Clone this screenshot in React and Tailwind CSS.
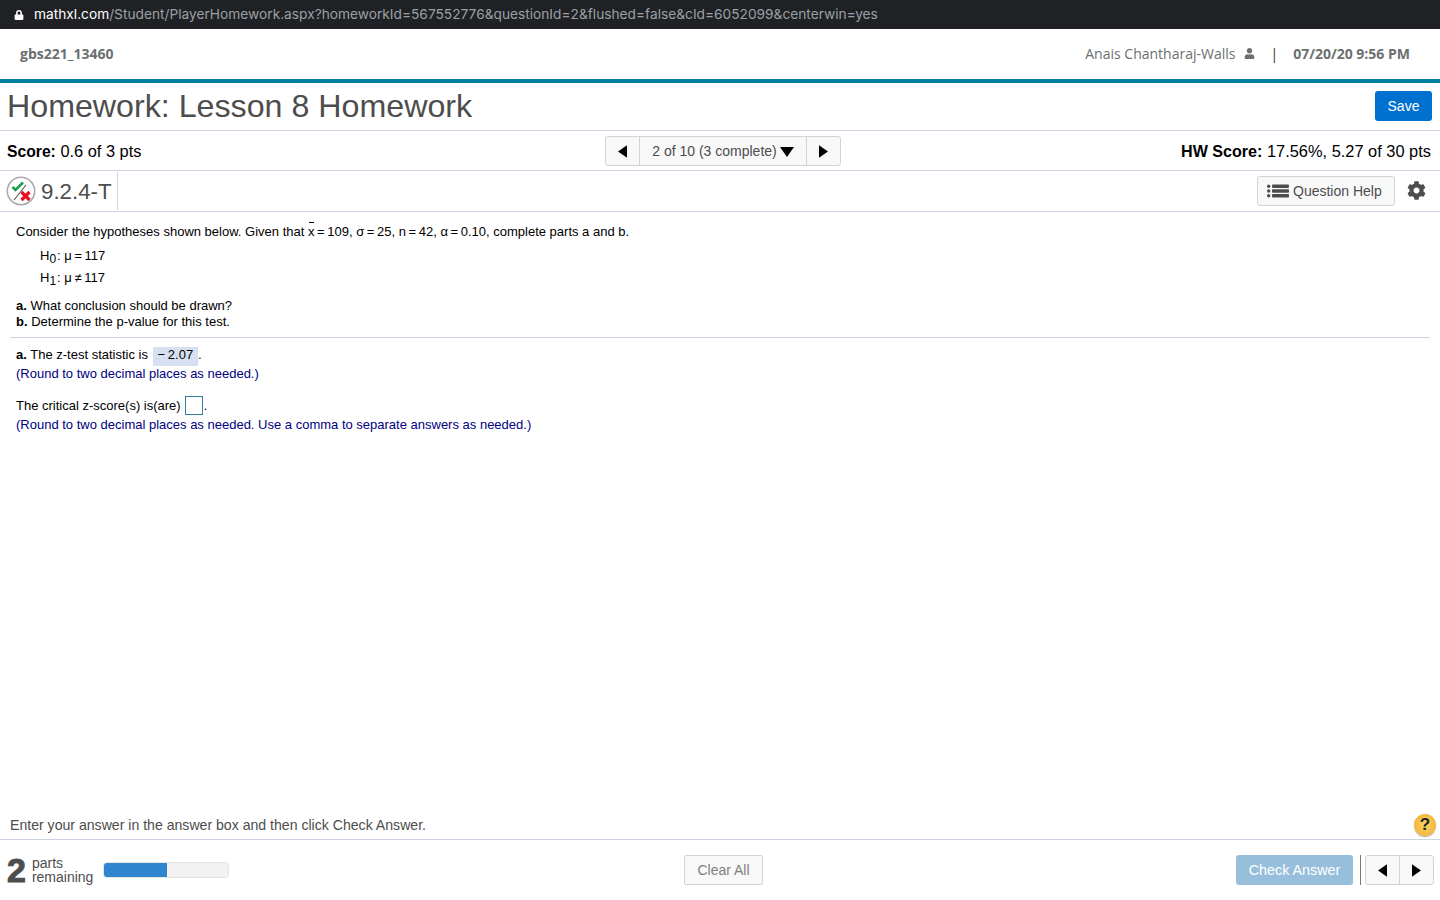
import { FaLock, FaUser, FaCog } from 'react-icons/fa'

const arial = "font-['Liberation_Sans',Arial,sans-serif]"

function Caret({ dir = 'left', className = '' }) {
  const pts = dir === 'left' ? '10,0 10,14 0,7' : dir === 'right' ? '0,0 0,14 10,7' : '0,0 14,0 7,10'
  const box = dir === 'down' ? '0 0 14 10' : '0 0 10 14'
  return (
    <svg viewBox={box} className={className} fill="#000">
      <polygon points={pts} />
    </svg>
  )
}

function StatusIcon() {
  return (
    <svg viewBox="0 0 30 30" className="w-[30px] h-[30px] shrink-0">
      <circle cx="15" cy="15" r="13.7" fill="#fff" stroke="#aaa" strokeWidth="1.6" />
      <line x1="8" y1="24" x2="20" y2="9" stroke="#555" strokeWidth="1.2" />
      <path d="M6.5 11 L9.5 14 L17 6.5" fill="none" stroke="#1f9e4a" strokeWidth="2.6" />
      <path d="M15.5 16 L23.5 24 M23.5 16 L15.5 24" fill="none" stroke="#e8101c" strokeWidth="3.2" />
    </svg>
  )
}

function ListIcon() {
  return (
    <svg viewBox="0 0 22 14" className="w-[22px] h-[14px]" fill="#4d4d4d">
      <rect x="0" y="0.5" width="3.4" height="3.4" rx="1.7" />
      <rect x="0" y="5.3" width="3.4" height="3.4" rx="1.7" />
      <rect x="0" y="10.1" width="3.4" height="3.4" rx="1.7" />
      <rect x="5" y="0.5" width="17" height="3.4" rx="0.8" />
      <rect x="5" y="5.3" width="17" height="3.4" rx="0.8" />
      <rect x="5" y="10.1" width="17" height="3.4" rx="0.8" />
    </svg>
  )
}

export default function App() {
  return (
    <div className={`h-screen flex flex-col bg-white overflow-hidden ${arial}`}>
      {/* browser address bar */}
      <div className="h-[29px] bg-[#202124] flex items-center pl-[14px] shrink-0">
        <FaLock size={10} className="text-white mr-[10px]" />
        <span className="text-[13.72px] font-['Inter',sans-serif] text-[#9aa0a6] whitespace-nowrap">
          <span className="text-white">mathxl.com</span>
          /Student/PlayerHomework.aspx?homeworkId=567552776&questionId=2&flushed=false&cId=6052099&centerwin=yes
        </span>
      </div>

      {/* site header */}
      <div className="h-[50px] flex items-center justify-between pl-[20px] pr-[30px] pb-[2px] font-['Open_Sans',sans-serif] text-[#6a7070] shrink-0">
        <span className="text-[14px] font-bold">gbs221_13460</span>
        <div className="flex items-center text-[14px]">
          <span>Anais Chantharaj-Walls</span>
          <FaUser size={11} className="ml-[9px] text-[#6a7070]" />
          <span className="ml-[15px] text-[#333]">|</span>
          <span className="ml-[15px] font-bold">07/20/20 9:56 PM</span>
        </div>
      </div>
      <div className="h-[4px] bg-[#007fa3] shrink-0" />

      {/* title */}
      <div className="h-[48px] flex items-center justify-between pl-[7px] pr-[8px] pb-[2px] border-b border-[#ccd3e2] shrink-0">
        <h1 className="text-[32.2px] text-[#4d4d4d] pt-[2px]">Homework: Lesson 8 Homework</h1>
        <button className="w-[57px] h-[30px] pt-[2px] bg-[#0071ce] rounded-[3px] text-white text-[14px]">Save</button>
      </div>

      {/* score row */}
      <div className="h-[40px] grid grid-cols-[598px_auto_1fr] items-center pl-[7px] pr-[9px] border-b border-[#ccd3e2] shrink-0 text-[16.4px] text-black">
        <div className="pt-[2px]"><b className="text-[15.7px]">Score:</b> 0.6 of 3 pts</div>
        <div className="flex h-[30px] border border-[#d4d4d4] rounded-[3px] bg-[#f8f8f8] text-[14px] text-[#4d4d4d]">
          <div className="w-[34px] pt-[2px] flex items-center justify-center border-r border-[#d4d4d4]">
            <Caret dir="left" className="w-[9px] h-[13px]" />
          </div>
          <div className="w-[167px] pt-[2px] flex items-center justify-center gap-[3px] border-r border-[#d4d4d4]">
            2 of 10 (3 complete)
            <Caret dir="down" className="w-[14px] h-[10px]" />
          </div>
          <div className="w-[33px] pt-[2px] flex items-center justify-center">
            <Caret dir="right" className="w-[9px] h-[13px]" />
          </div>
        </div>
        <div className="text-right pt-[2px]"><b className="text-[16.1px]">HW Score:</b> 17.56%, 5.27 of 30 pts</div>
      </div>

      {/* question id row */}
      <div className="h-[41px] flex items-center border-b border-[#ccd3e2] shrink-0">
        <div className="h-[38px] w-[118px] flex items-center pl-[6px] gap-[5px] border-r border-[#ccd3e2] self-start mt-[1px]">
          <StatusIcon />
          <span className="text-[22.3px] text-[#4d4d4d] pt-[2px]">9.2.4-T</span>
        </div>
        <div className="ml-auto flex items-center pr-[14px]">
          <button className="w-[138px] h-[30px] border border-[#d4d4d4] rounded-[3px] bg-[#f8f8f8] flex items-center pl-[9px] gap-[4px] text-[14px] text-[#4d4d4d]">
            <ListIcon />
            Question Help
          </button>
          <FaCog size={19} className="ml-[12px] mb-[2px] text-[#4d4d4d]" />
        </div>
      </div>

      {/* question */}
      <div className="flex-1 pl-[16px] pr-[10px] pt-[12px] text-[13px] text-black leading-[16px]">
        <p>
          Consider the hypotheses shown below. Given that{' '}
          <span className="relative inline-block">
            x
            <span className="absolute left-[1px] top-[-2px] w-[5px] h-[1px] bg-black" />
          </span>
          {'\u2009=\u2009109, σ\u2009=\u200925, n\u2009=\u200942, α\u2009=\u20090.10, complete parts a and b.'}
        </p>
        <div className="ml-[24px] mt-[8px]">
          <p className="h-[22px]">H<sub className="text-[12px] pr-[1px]">0</sub>{': μ\u2009=\u2009117'}</p>
          <p className="h-[21px]">H<sub className="text-[12px] pr-[1px]">1</sub>{': μ\u2009≠\u2009117'}</p>
        </div>
        <div className="mt-[7px]">
          <p><b>a.</b> What conclusion should be drawn?</p>
          <p><b>b.</b> Determine the p-value for this test.</p>
        </div>
        <div className="border-t border-[#ccd3e2] mt-[7px] -ml-[6px] pt-[9px]">
          <div className="ml-[6px]">
            <p className="h-[19px]">
              <b>a.</b> The z-test statistic is{' '}
              <span className="inline-block bg-[#d6e0f0] px-[5px] h-[19px] ml-[1px]">{'−\u20092.07'}</span>.
            </p>
            <p className="text-[#000080]">(Round to two decimal places as needed.)</p>
            <p className="mt-[14px] flex items-center">
              The critical z-score(s) is(are)
              <span className="inline-block w-[18px] h-[19px] border border-[#2f7f9f] ml-[4px] mr-[1px]" />.
            </p>
            <p className="text-[#000080] mt-[2px]">(Round to two decimal places as needed. Use a comma to separate answers as needed.)</p>
          </div>
        </div>
      </div>

      {/* instruction row */}
      <div className="h-[28px] flex items-center justify-between pl-[10px] pr-[4px] border-b border-[#ccd3e2] shrink-0 text-[14.1px] text-[#4d4d4d]">
        <span>Enter your answer in the answer box and then click Check Answer.</span>
        <div className="w-[22px] h-[22px] mb-[2px] rounded-full bg-radial from-[#fbd565] to-[#eeaa22] shadow-[0_1px_1px_rgba(0,0,0,0.35)] flex items-center justify-center text-[17px] font-bold text-[#222]">?</div>
      </div>

      {/* footer */}
      <div className="h-[60px] grid grid-cols-[677px_auto_1fr] items-center pl-[7px] pr-[6px] shrink-0">
        <div className="flex items-center">
          <span className="text-[34px] font-bold text-[#4d4d4d] leading-none [-webkit-text-stroke:1px_#4d4d4d]">2</span>
          <div className="ml-[6px] text-[14px] leading-[14px] text-[#4d4d4d]">
            parts<br />remaining
          </div>
          <div className="ml-[10px] w-[126px] h-[16px] rounded-[4px] bg-[#f2f2f2] border border-[#e4e4e4] overflow-hidden">
            <div className="w-[63px] h-full bg-[#2f86cf]" />
          </div>
        </div>
        <button className="w-[79px] h-[30px] border border-[#d4d4d4] rounded-[2px] bg-[#f8f8f8] text-[14px] text-[#808080]">Clear All</button>
        <div className="flex items-center justify-end">
          <button className="w-[117px] h-[30px] pt-[2px] rounded-[3px] bg-[#97bfdc] text-white text-[14.3px]">Check Answer</button>
          <div className="w-px h-[30px] bg-[#777] ml-[7px] mr-[4px]" />
          <div className="flex h-[30px] border border-[#d4d4d4] rounded-[3px] bg-[#f8f8f8]">
            <div className="w-[34px] flex items-center justify-center border-r border-[#d4d4d4]">
              <Caret dir="left" className="w-[9px] h-[13px]" />
            </div>
            <div className="w-[33px] flex items-center justify-center">
              <Caret dir="right" className="w-[9px] h-[13px]" />
            </div>
          </div>
        </div>
      </div>
    </div>
  )
}
